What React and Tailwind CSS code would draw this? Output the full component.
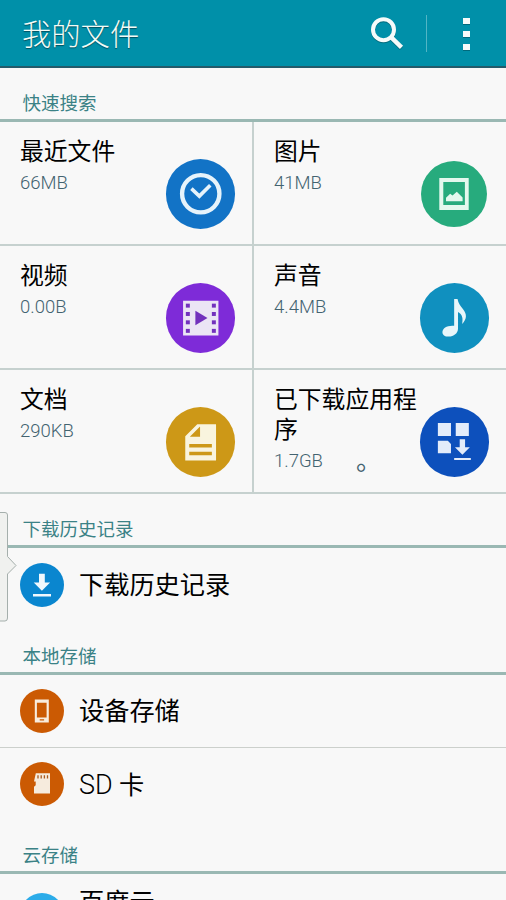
const QUICK = [
  { title: '最近文件', size: '66MB', color: 'bg-[#1273c6]', Icon: RecentIcon },
  { title: '图片', size: '41MB', color: 'bg-[#27ab7d]', Icon: ImageIcon, small: true },
  { title: '视频', size: '0.00B', color: 'bg-[#7e2bd8]', Icon: VideoIcon },
  { title: '声音', size: '4.4MB', color: 'bg-[#1090bf]', Icon: MusicIcon },
  { title: '文档', size: '290KB', color: 'bg-[#cd9817]', Icon: DocIcon },
  { title: '已下载应用程序', size: '1.7GB', color: 'bg-[#0d50bc]', Icon: AppsIcon, mark: '。' },
]

// Tile icons share a 70x70 box, the list ones a 44x44 box
function RecentIcon() {
  return (
    <svg viewBox="0 0 70 70" className="size-full" fill="none" stroke="#e6f3fb">
      <circle cx="35" cy="35" r="18.8" strokeWidth="4.4" />
      <path d="M25.6 29.8 33.6 37.4 44.6 26.4" strokeWidth="3.6" />
    </svg>
  )
}

function ImageIcon() {
  return (
    <svg viewBox="0 0 66 66" className="size-full" fill="#e4f8ee">
      <path fillRule="evenodd" d="M18.3 17h29.4v32H18.3zM22.3 21v23h21.6V21z" />
      <path d="M25 40.3v-3.5l4.2-4 2.3 1.8 4.3-3.8 5.8 5.6v3.9z" />
    </svg>
  )
}

function VideoIcon() {
  return (
    <svg viewBox="0 0 70 70" className="size-full">
      <path d="M17.2 18h35.6v35H17.2z" fill="#ebe5f5" />
      <g fill="#7231bd">
        {[20.8, 29.2, 37.6, 46.2].map((y) => (
          <g key={y}>
            <rect x="20" y={y} width="4" height="4" />
            <rect x="46.2" y={y} width="4" height="4" />
          </g>
        ))}
        <path d="M29.6 28v14.6L41.8 35.3z" />
      </g>
    </svg>
  )
}

function MusicIcon() {
  return (
    <svg viewBox="0 0 70 70" className="size-full" fill="#e8f6fa">
      <path d="M34.4 16.2h3.4c.8 4.6 3 6.8 5.4 9.9 4.4 5.6 4 9.9-.8 15.2 1.2-5.8.2-9.8-4.1-12.1v16.6c0 4.800-4.300 8.200-9.400 8.200-4 0-6.300-1.900-6.300-4.500 0-4.100 5-7.100 11.800-6.400z" />
    </svg>
  )
}

function DocIcon() {
  return (
    <svg viewBox="0 0 70 70" className="size-full" fill="#f9f4de">
      <path fillRule="evenodd" d="M31.5 17.3H50.4V54H19.4V29.4zM34.3 19.7 24 29.9h10.3zM23.4 37.3v3.400h22.8v-3.400zM23.4 45v3.600h22.8V45z" />
    </svg>
  )
}

function AppsIcon() {
  return (
    <svg viewBox="0 0 70 70" className="size-full" fill="#e3ecfa">
      <path d="M18 16h13.2v13.2H18zM36 16h13.2v13.2H36zM18 34h10l3.200 3.200v9.500H18z" />
      <path d="M40 32.6h5.400v8h4.800L42.7 48.2 35.2 40.6H40zM34.4 51.3h16.800v2.200H34.400z" />
    </svg>
  )
}

function DownloadIcon() {
  return (
    <svg viewBox="0 0 44 44" className="size-full" fill="#f0f8fd">
      <path d="M19 10.7h5.800v8.900h5.300l-8.200 8.200-8.200-8.200H19zM13 30.900h18v2.500H13z" />
    </svg>
  )
}

function PhoneIcon() {
  return (
    <svg viewBox="0 0 44 44" className="size-full" fill="#f8ecdd">
      <path fillRule="evenodd" d="M14.8 10.5h14v23h-14zM16.9 13.8v14.700h9.700V13.800zM19.700 30.300v1.300h4.400v-1.300z" />
    </svg>
  )
}

function SdIcon() {
  return (
    <svg viewBox="0 0 44 44" className="size-full" fill="#f6ebdd">
      <path d="M15.8 11.3H30V31.5H14v-6.800l1.700-1.500V19.400H14z" />
      <path d="M18 13.2v3.200M21.2 13.2v3.200M24.4 13.2v3.200M27.5 13.2v3.200" stroke="#a9591c" strokeWidth="1.3" />
    </svg>
  )
}

function SectionHeader({ children, className }) {
  return (
    <h2 className={`flex shrink-0 items-end border-b-[3px] border-[#9ab8b3] pl-[22.5px] pb-[2px] font-normal text-[18.5px] leading-[26px] text-[#3b8286] ${className}`}>
      {children}
    </h2>
  )
}

function Tile({ title, size, color, Icon, small, mark }) {
  return (
    <div className="relative border-r-2 border-b-2 border-[#c6d1cf] pl-5 pt-[15px] even:border-r-0">
      <p className="w-[146px] text-[23.8px] leading-[30px] text-black">{title}</p>
      <p className="mt-[5px] flex font-light text-[18.5px] leading-[22px] text-[#436370]">
        {size}
        {mark && <span className="ml-[33px] font-normal text-[26px]">{mark}</span>}
      </p>
      <div className={`absolute rounded-full ${color} ${small ? 'right-[19px] top-[39px] size-[66px]' : 'right-[17px] top-[37px] size-[69.5px]'}`}>
        <Icon />
      </div>
    </div>
  )
}

function Row({ title, color, Icon, className }) {
  return (
    <div className={`flex shrink-0 items-center pl-5 ${className}`}>
      <div className={`size-11 shrink-0 rounded-full ${color}`}><Icon /></div>
      <p className="ml-[15px] mt-[2px] text-[25.2px] leading-[36px] text-black">{title}</p>
    </div>
  )
}

export default function App() {
  return (
    <div className="relative flex h-[900px] w-[506px] flex-col overflow-hidden bg-[#f8f8f8] font-[Roboto,'Noto_Sans_CJK_SC',sans-serif] font-normal">
      {/* Title bar */}
      <header className="flex h-[68px] shrink-0 items-center border-b-2 border-[#245b6b] bg-[#0090a9] pl-[22px]">
        <h1 className="mt-[3px] grow font-light text-[29.3px] leading-[40px] text-[#f4fbf6] text-shadow-[0_1px_1px_#00505f]">我的文件</h1>
        <svg width="34" height="34" viewBox="0 0 34 34" fill="none" stroke="#f6fbfa" strokeWidth="4" className="mr-[22px] drop-shadow-[0_1px_0_#006a7c]">
          <circle cx="13.5" cy="13.7" r="10.5" />
          <path d="M21 21.2 31.5 31.4" strokeWidth="4.5" />
        </svg>
        <div className="h-[37px] w-px bg-[#52b5c5]" />
        <div className="ml-[36px] mr-[36px] mt-[2px] flex flex-col gap-[7px]">
          <span className="h-[6px] w-[7px] bg-[#f6fbfa] shadow-[0_1px_0_#006a7c]" />
          <span className="h-[6px] w-[7px] bg-[#f6fbfa] shadow-[0_1px_0_#006a7c]" />
          <span className="h-[6px] w-[7px] bg-[#f6fbfa] shadow-[0_1px_0_#006a7c]" />
        </div>
      </header>

      <SectionHeader className="h-[54px]">快速搜索</SectionHeader>
      <div className="grid shrink-0 grid-cols-[254px_252px] auto-rows-[124px]">
        {QUICK.map((q) => <Tile key={q.title} {...q} />)}
      </div>

      <SectionHeader className="h-[54px]">下载历史记录</SectionHeader>
      <Row title="下载历史记录" color="bg-[#0a86cf]" Icon={DownloadIcon} className="h-[73px]" />

      <SectionHeader className="h-[54px]">本地存储</SectionHeader>
      <Row title="设备存储" color="bg-[#cb5a03]" Icon={PhoneIcon} className="h-[73px] border-b border-[#ccd0cc]" />
      <Row title={<><span className="font-light text-[27px]">SD</span> 卡</>} color="bg-[#cb5a03]" Icon={SdIcon} className="h-[72px]" />

      <SectionHeader className="h-[54px]">云存储</SectionHeader>
      <div className="flex shrink-0 items-start pl-5">
        <div className="mt-[19px] size-11 shrink-0 rounded-full bg-[#2cace9]" />
        <p className="ml-[15px] mt-[11px] text-[25.2px] leading-[36px] text-black">百度云</p>
      </div>

      {/* Edge handle */}
      <svg width="18" height="112" viewBox="0 0 18 112" className="absolute left-0 top-[511px]" fill="#f0f1ef" stroke="#a5afac">
        <path d="M-1 1.5H5Q7.5 1.5 7.5 4V45.5L16 54.5 7.5 63V107Q7.5 110 5 110H-1z" />
      </svg>
    </div>
  )
}
